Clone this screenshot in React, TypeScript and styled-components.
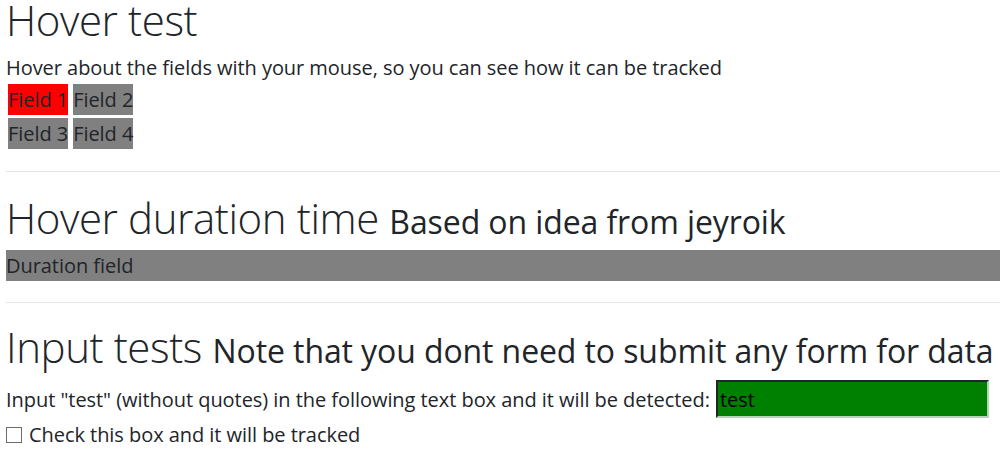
import styled, { createGlobalStyle } from 'styled-components';

const GlobalStyle = createGlobalStyle`
  html, body {
    margin: 0;
    padding: 0;
    background: #ffffff;
  }
  body {
    font-family: 'Open Sans', 'Noto Sans', sans-serif;
    font-size: 20px;
    line-height: 1.5;
    color: #212529;
    letter-spacing: -0.05px;
  }
`;

const Page = styled.div`
  padding: 0 0 0 6px;
  overflow: hidden;
`;

const Heading = styled.h1`
  margin: 0;
  font-size: 42px;
  line-height: 40px;
  font-weight: 300;
  white-space: nowrap;
  letter-spacing: -0.4px;
`;

const Small = styled.small`
  font-size: 32px;
  line-height: 0;
  font-weight: 400;
  letter-spacing: -0.1px;
`;

const Text = styled.p`
  margin: 13px 0 1px;
`;

const FieldGrid = styled.div`
  display: flex;
  flex-direction: column;
  gap: 3px;
  margin-left: 2px;
`;

const FieldRow = styled.div`
  display: flex;
  gap: 5px;
`;

interface FieldProps {
  active?: boolean;
}

const Field = styled.div<FieldProps>`
  line-height: 31px;
  height: 31px;
  background-color: ${({ active }) => (active ? '#ff0000' : '#808080')};
`;

const Divider = styled.hr<{ top: number; bottom: number }>`
  margin: ${({ top, bottom }) => `${top}px 0 ${bottom}px`};
  border: 0;
  border-top: 1px solid rgba(0, 0, 0, 0.1);
`;

const DurationField = styled.div`
  margin-top: 12px;
  line-height: 31px;
  height: 31px;
  background-color: #808080;
`;

const InputRow = styled.div`
  display: flex;
  align-items: baseline;
  margin-top: 13px;
  white-space: nowrap;
`;

const TextBox = styled.input`
  box-sizing: border-box;
  margin-left: 6px;
  width: 273px;
  height: 38px;
  padding: 1px 2px;
  font-family: inherit;
  font-size: 20px;
  letter-spacing: -0.05px;
  color: #000000;
  background-color: #008000;
  border: 2px inset #b8d4b8;
  border-top-color: #7a7a7a;
  border-left-color: #7a7a7a;
  outline: none;
`;

const CheckRow = styled.label`
  display: flex;
  align-items: center;
  gap: 7px;
  margin-top: 2px;
  line-height: 30px;
`;

const CheckBox = styled.span`
  box-sizing: border-box;
  display: inline-block;
  width: 16px;
  height: 16px;
  border: 1px solid #6d6d6d;
  background: #ffffff;
`;

export default function App() {
  return (
    <>
      <GlobalStyle />
      <Page>
        <Heading>Hover test</Heading>
        <Text>Hover about the fields with your mouse, so you can see how it can be tracked</Text>
        <FieldGrid>
          <FieldRow>
            <Field active>Field 1</Field>
            <Field>Field 2</Field>
          </FieldRow>
          <FieldRow>
            <Field>Field 3</Field>
            <Field>Field 4</Field>
          </FieldRow>
        </FieldGrid>
        <Divider top={22} bottom={26} />
        <Heading as="h2">
          Hover duration time <Small>Based on idea from jeyroik</Small>
        </Heading>
        <DurationField>Duration field</DurationField>
        <Divider top={21} bottom={24} />
        <Heading as="h2">
          Input tests <Small>Note that you dont need to submit any form for data</Small>
        </Heading>
        <InputRow>
          Input "test" (without quotes) in the following text box and it will be detected:
          <TextBox defaultValue="test" />
        </InputRow>
        <CheckRow>
          <CheckBox />
          Check this box and it will be tracked
        </CheckRow>
      </Page>
    </>
  );
}
